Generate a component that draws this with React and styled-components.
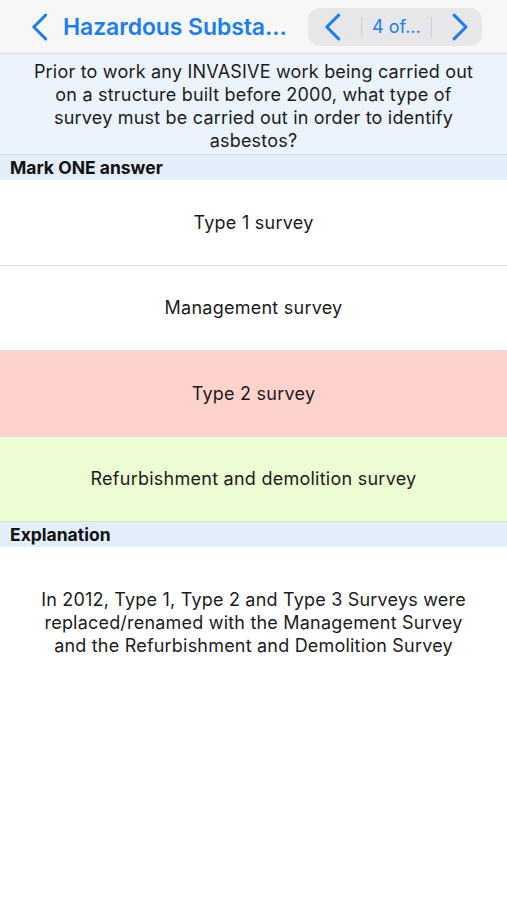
import React from "react";
import styled, { createGlobalStyle } from "styled-components";

const Global = createGlobalStyle`
  html, body { margin: 0; padding: 0; background: #fff; }
  body { font-family: Inter, "Noto Sans", sans-serif; color: #111; -webkit-font-smoothing: antialiased; }
`;

const Page = styled.div`
  width: 507px;
  min-height: 900px;
  background: #fff;
  display: flex;
  flex-direction: column;
`;

const NavBar = styled.header`
  height: 54px;
  box-sizing: border-box;
  background: #f7f7f7;
  border-bottom: 1px solid #dcdcdc;
  display: flex;
  align-items: center;
  padding: 0 25px 0 29px;
  gap: 14px;
`;

const IconButton = styled.button`
  border: 0;
  background: none;
  padding: 0;
  display: flex;
  align-items: center;
  justify-content: center;
  color: #1a7df2;
  width: ${(p) => p.$w || 20}px;
  height: 30px;
  flex: none;
  cursor: pointer;
`;

const Title = styled.h1`
  margin: 0;
  font-size: 23px;
  font-weight: 600;
  color: #1a7df2;
  white-space: nowrap;
  letter-spacing: -0.1px;
  flex: 1;
`;

const Segment = styled.div`
  width: 174px;
  height: 38px;
  border-radius: 12px;
  background: #e7e7e9;
  display: flex;
  align-items: center;
  padding: 0 0 0 14px;
  box-sizing: border-box;
  gap: 19px;
  flex: none;
`;

const Divider = styled.span`
  width: 1px;
  height: 20px;
  background: #cfcfd3;
  flex: none;
`;

const Counter = styled.span`
  font-size: 18px;
  color: #1a7df2;
  margin: 0 -9px;
  white-space: nowrap;
  flex: none;
`;

const Question = styled.section`
  background: #ebf3fd;
  border-bottom: 1px solid #d3dbe4;
  padding: 6px 30px 2px;
  text-align: center;
  font-size: 18px;
  line-height: 23px;
  letter-spacing: 0.2px;
  color: #1b1b1b;
`;

const SectionHeader = styled.div`
  background: #e3eefb;
  height: 25px;
  display: flex;
  align-items: center;
  padding: 0 10px;
  font-size: 17.5px;
  font-weight: 700;
  color: #111;
`;

const fills = { correct: "#ecfcd3", wrong: "#ffd2cc", none: "#ffffff" };

const Option = styled.div`
  height: 85.5px;
  box-sizing: border-box;
  border-bottom: 1px solid #dedede;
  background: ${(p) => fills[p.$state]};
  display: flex;
  align-items: center;
  justify-content: center;
  font-size: 18px;
  letter-spacing: 0.25px;
  color: #1b1b1b;
  &:last-child { border-bottom-color: #d8dfd0; }
`;

const Explanation = styled.p`
  margin: 0;
  padding: 41px 38px 0;
  text-align: center;
  font-size: 18px;
  line-height: 23px;
  letter-spacing: 0.2px;
  color: #1b1b1b;
`;

const Chevron = ({ dir = "left", size = 28 }) => (
  <svg width={size * 0.6} height={size} viewBox="0 0 12 20" fill="none">
    <path
      d={dir === "left" ? "M10.5 1.5 L2 10 L10.5 18.5" : "M1.5 1.5 L10 10 L1.5 18.5"}
      stroke="currentColor"
      strokeWidth="2.1"
      strokeLinecap="round"
      strokeLinejoin="round"
    />
  </svg>
);

const options = [
  { text: "Type 1 survey", state: "none" },
  { text: "Management survey", state: "none" },
  { text: "Type 2 survey", state: "wrong" },
  { text: "Refurbishment and demolition survey", state: "correct" },
];

export default function App() {
  return (
    <Page>
      <Global />
      <NavBar>
        <IconButton aria-label="Back">
          <Chevron dir="left" size={28} />
        </IconButton>
        <Title>Hazardous Substa...</Title>
        <Segment>
          <IconButton aria-label="Previous">
            <Chevron dir="left" size={28} />
          </IconButton>
          <Divider />
          <Counter>4 of...</Counter>
          <Divider />
          <IconButton aria-label="Next">
            <Chevron dir="right" size={28} />
          </IconButton>
        </Segment>
      </NavBar>
      <Question>
        Prior to work any INVASIVE work being carried out on a structure built before 2000, what type of survey must be carried out in order to identify asbestos?
      </Question>
      <SectionHeader>Mark ONE answer</SectionHeader>
      <div>
        {options.map((o) => (
          <Option key={o.text} $state={o.state}>{o.text}</Option>
        ))}
      </div>
      <SectionHeader>Explanation</SectionHeader>
      <Explanation>
        In 2012, Type 1, Type 2 and Type 3 Surveys were replaced/renamed with the Management Survey and the Refurbishment and Demolition Survey
      </Explanation>
    </Page>
  );
}
